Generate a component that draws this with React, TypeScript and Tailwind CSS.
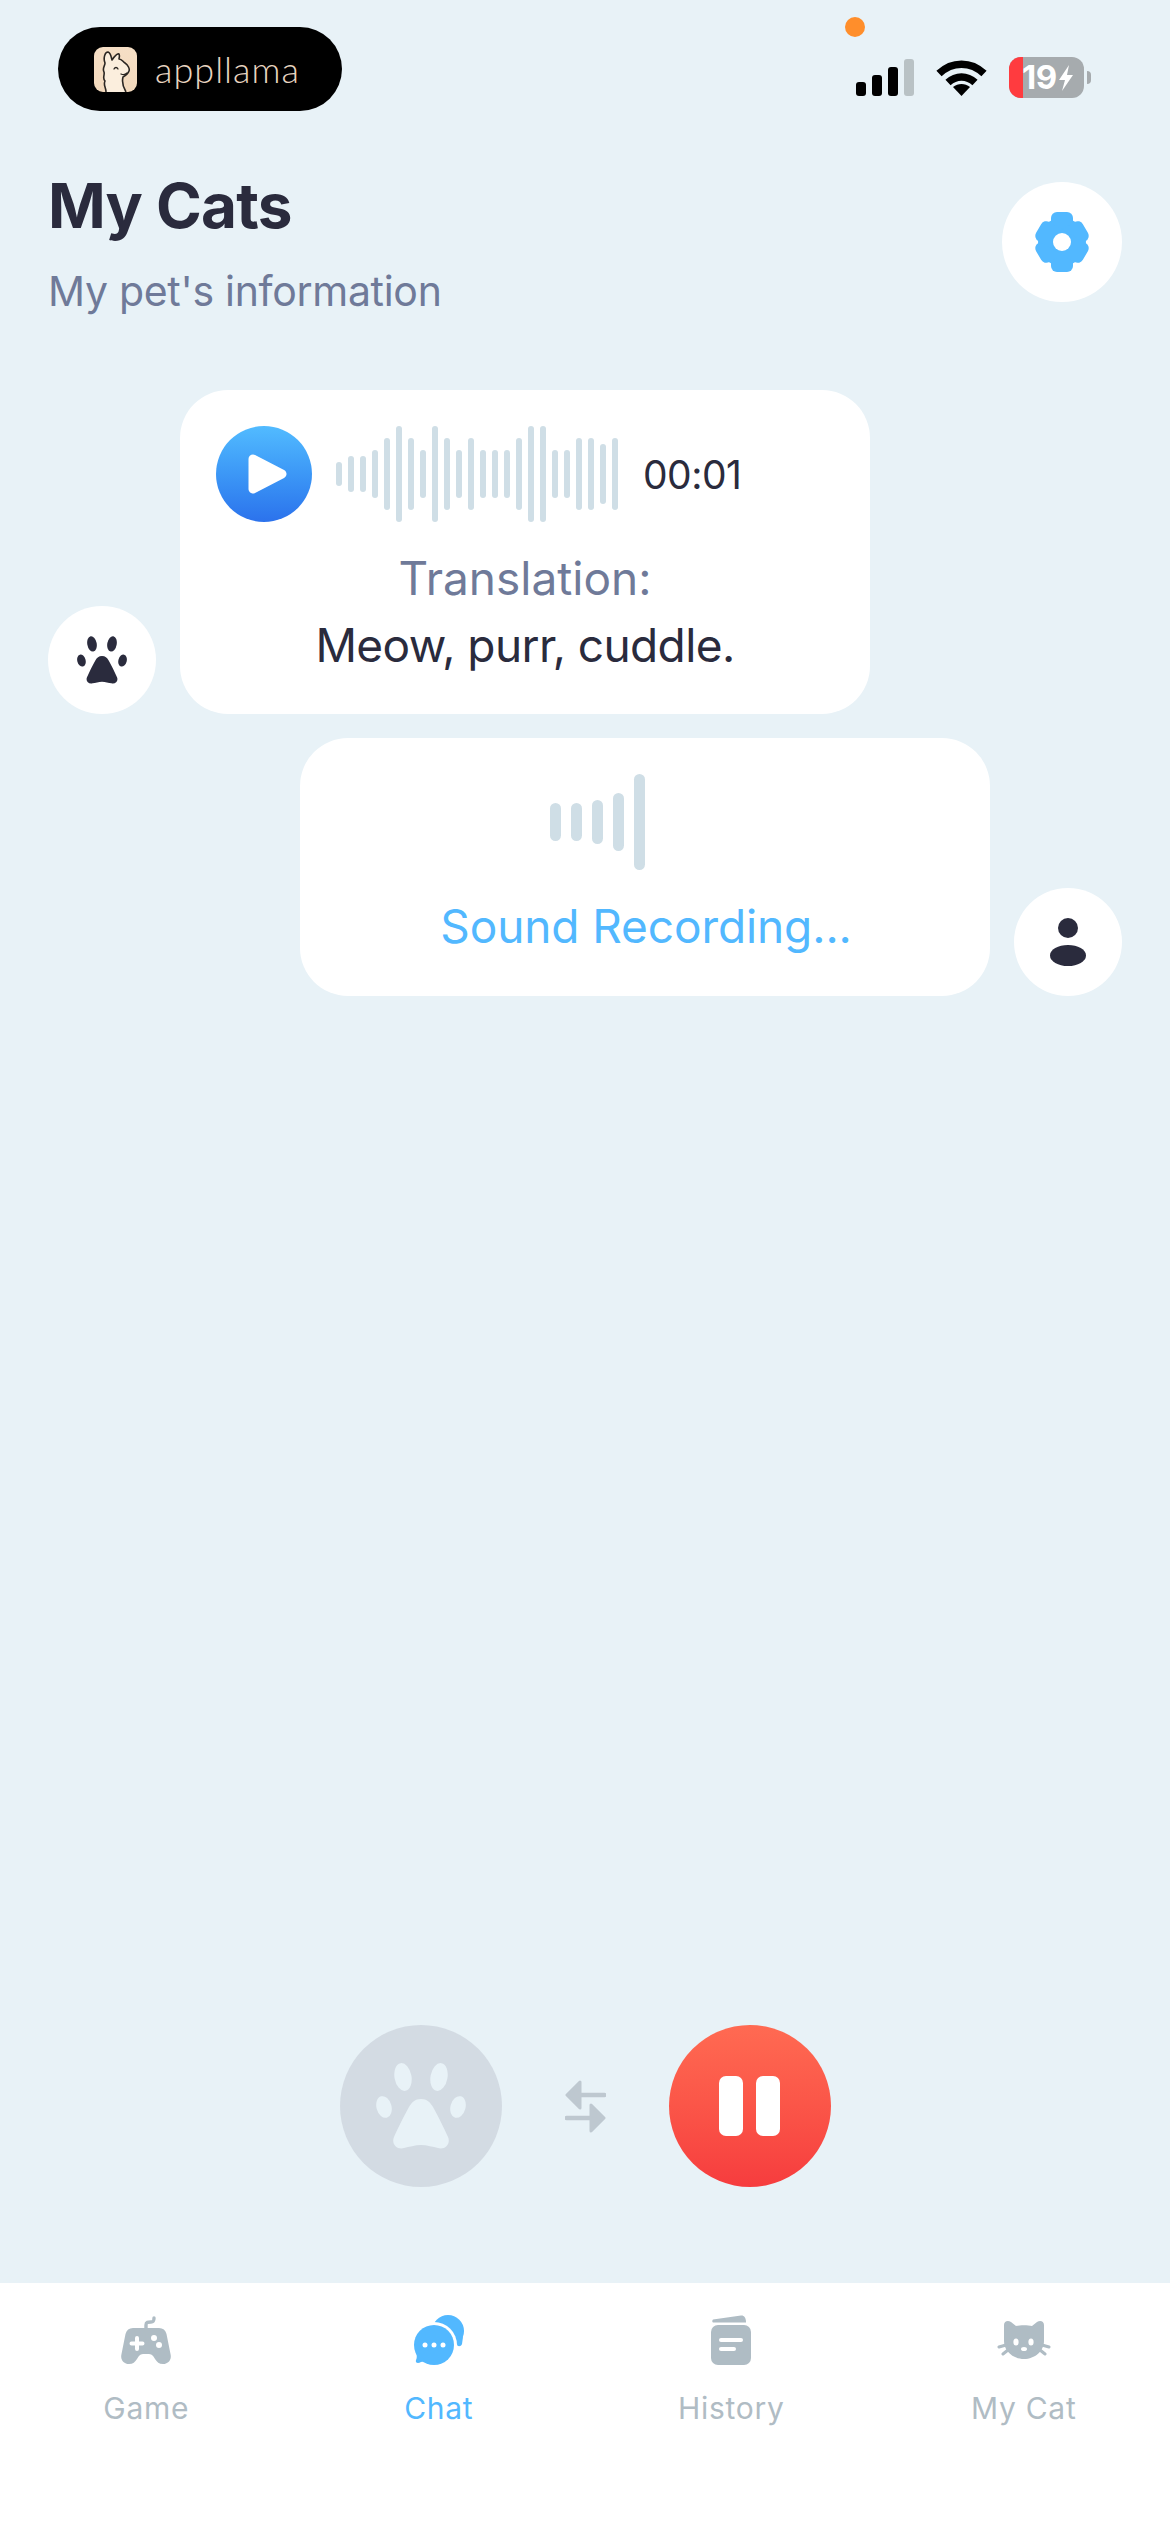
import React from 'react';

const WAVE = [24, 36, 36, 48, 72, 96, 72, 48, 96, 72, 48, 72, 48, 48, 48, 72, 96, 96, 48, 48, 72, 72, 60, 72];
const LEVELS = [38, 38, 44, 58, 96];

const PawIcon = ({ className, padClass }: { className: string; padClass: string }) => (
  <svg viewBox="0 0 90 86" className={`${className} ${padClass}`}>
    <ellipse cx="27" cy="14" rx="8.5" ry="14" transform="rotate(-10 27 14)" />
    <ellipse cx="63" cy="14" rx="8.5" ry="14" transform="rotate(10 63 14)" />
    <ellipse cx="8" cy="44" rx="7.5" ry="11" transform="rotate(-15 8 44)" />
    <ellipse cx="82" cy="44" rx="7.5" ry="11" transform="rotate(15 82 44)" />
    <path d="M45 36C51 36 54 39 57 44C62 53 68 65 72 74C75 81 69 87 62 85C57 84 51 82 45 82C39 82 33 84 28 85C21 87 15 81 18 74C22 65 28 53 33 44C36 39 39 36 45 36Z" />
  </svg>
);

const GearIcon = () => (
  <svg viewBox="0 0 60 60" className="h-[60px] w-[60px] fill-[#52b8ff]">
    <circle cx="30" cy="30" r="24" />
    <rect x="19" y="0" width="22" height="60" rx="6" />
    <rect x="19" y="3" width="22" height="54" rx="6" transform="rotate(60 30 30)" />
    <rect x="19" y="3" width="22" height="54" rx="6" transform="rotate(120 30 30)" />
    <circle cx="30" cy="30" r="9" className="fill-white" />
  </svg>
);

const LlamaIcon = () => (
  <svg viewBox="0 0 43 45" className="h-[45px] w-[43px] shrink-0">
    <defs>
      <linearGradient id="llamaBg" x1="0" y1="0" x2="0" y2="1">
        <stop offset="0" stopColor="#f6dfc6" />
        <stop offset="1" stopColor="#f3d9bc" />
      </linearGradient>
    </defs>
    <rect width="43" height="45" rx="9" fill="url(#llamaBg)" />
    <path
      d="M12 45C12 40 9 38 11 34C8 31 11 28 10 25C8 21 11 19 11 16C9 11 11 5 14 5C17 6 17 10 18 13C20 10 23 6 25 7C26 9 25 11 25 12C28 12 29 15 31 16C34 18 36 22 35 24C34 27 31 29 29 30C28 34 29 40 32 45"
      fill="#fbeedd"
      stroke="#2b2622"
      strokeWidth="1.6"
      strokeLinejoin="round"
    />
    <path d="M20 22C21 20 23 20 24 22M27 27C29 28 31 28 33 26" fill="none" stroke="#2b2622" strokeWidth="1.3" strokeLinecap="round" />
  </svg>
);

const GameIcon = () => (
  <svg viewBox="0 0 50 48" className="h-[48px] w-[50px] fill-[#afbcc4]">
    <path d="M25 14V9C25 6 27 6 30 6C33 6 33 4 33 2" fill="none" stroke="#afbcc4" strokeWidth="3.4" strokeLinecap="round" />
    <path d="M12 12H38C42 12 44.5 14 45.5 18L49.5 38C51 44 47 48 42 48C38 48 36 46 34 43C33 41 31 38 28 38H22C19 38 17 41 16 43C14 46 12 48 8 48C3 48 -1 44 0.5 38L4.5 18C5.5 14 8 12 12 12Z" />
    <path d="M16 22V33M10.5 27.5H21.5" stroke="#fff" strokeWidth="4" strokeLinecap="round" />
    <circle cx="33" cy="22" r="3" fill="#fff" />
    <circle cx="38" cy="29" r="3" fill="#fff" />
  </svg>
);

const ChatIcon = () => (
  <svg viewBox="0 0 50 50" className="h-[50px] w-[50px] fill-[#52b8ff]">
    <circle cx="34" cy="16" r="16" />
    <path d="M42 24L49 22L48 29C47 32 43 32 43 29Z" />
    <circle cx="20" cy="30" r="23" fill="#fff" />
    <circle cx="20" cy="30" r="20" />
    <path d="M2 36C3 41 3 43 2 45C1 48 4 49 7 47L12 46Z" />
    <circle cx="11" cy="30" r="2.5" fill="#fff" />
    <circle cx="20" cy="30" r="2.5" fill="#fff" />
    <circle cx="29" cy="30" r="2.5" fill="#fff" />
  </svg>
);

const HistoryIcon = () => (
  <svg viewBox="0 0 40 50" className="h-[50px] w-[40px] fill-[#afbcc4]">
    <path d="M2 4.5L30 0.5C33 0.2 35 2.5 35 7.5H2C1 7.5 1 5 2 4.5Z" />
    <rect x="0" y="10" width="40" height="40" rx="7" />
    <rect x="8" y="23" width="24" height="4" rx="2" fill="#fff" />
    <rect x="8" y="32" width="17" height="4" rx="2" fill="#fff" />
  </svg>
);

const CatIcon = () => (
  <svg viewBox="0 0 54 38" className="h-[38px] w-[54px] fill-[#afbcc4]">
    <path d="M7 4C7 0 11 -1 14 1L19 5C23 4 31 4 35 5L40 1C43 -1 47 0 47 4V20C47 30 38 38 27 38C16 38 7 30 7 20Z" />
    <path d="M9 24L2 26M11 29L6 33M45 24L52 26M43 29L48 33" fill="none" stroke="#afbcc4" strokeWidth="3" strokeLinecap="round" />
    <ellipse cx="19" cy="21" rx="2.6" ry="3.5" fill="#fff" />
    <ellipse cx="34" cy="21" rx="2.6" ry="3.5" fill="#fff" />
    <ellipse cx="27" cy="28" rx="3" ry="2" fill="#fff" />
  </svg>
);

const TabItem = ({ label, active, children }: { label: string; active?: boolean; children: React.ReactNode }) => (
  <div className="flex flex-col items-center">
    <div className="flex h-[50px] items-center">{children}</div>
    <span
      className={`mt-[25px] text-[30px] leading-[36px] tracking-[0.7px] ${active ? 'text-[#52b8ff]' : 'text-[#b0bcc4]'}`}
    >
      {label}
    </span>
  </div>
);

const StatusIcons = () => (
  <div className="flex items-center">
    <div className="flex h-[37px] items-end gap-[6px]">
      <div className="h-[14px] w-[10px] rounded-[3px] bg-black" />
      <div className="h-[21px] w-[10px] rounded-[3px] bg-black" />
      <div className="h-[29px] w-[10px] rounded-[3px] bg-black" />
      <div className="h-[37px] w-[10px] rounded-[3px] bg-[#b9c2c5]" />
    </div>
    <svg viewBox="0 0 51 37" className="ml-[22px] h-[37px] w-[51px]">
      <path d="M3 14.5C16 2 35 2 48 14.5" fill="none" stroke="#000" strokeWidth="7.5" />
      <path d="M12 23.5C20 16 31 16 39 23.5" fill="none" stroke="#000" strokeWidth="7.5" />
      <path d="M17 28C22 24 29 24 34 28L25.500 37Z" fill="#000" />
    </svg>
    <div className="relative ml-[22px] flex h-[41px] w-[75px] items-center overflow-hidden rounded-[12px] bg-[#a6abae]">
      <div className="h-full w-[14px] bg-[#ff3b3f]" />
      <span className="ml-[-1px] text-[33px] leading-none font-bold tracking-[-0.5px] text-white">19</span>
      <svg viewBox="0 0 16 26" className="ml-[1px] h-[26px] w-[16px] fill-white">
        <path d="M11 0L1 15H7L4 26L15 10H9Z" />
      </svg>
    </div>
    <div className="ml-[3px] h-[13px] w-[4px] rounded-r-full bg-[#a6abae]" />
  </div>
);

export default function App() {
  return (
    <div className="flex h-[2532px] w-[1170px] flex-col overflow-hidden bg-[#e8f2f7] font-['Inter',sans-serif]">
      {/* status bar */}
      <div className="relative flex h-[111px] items-end justify-between pr-[79px] pl-[58px]">
        <div className="flex h-[84px] w-[284px] items-center rounded-full bg-black pl-[36px]">
          <LlamaIcon />
          <span className="ml-[18px] font-['Lato',sans-serif] text-[36px] leading-none font-light tracking-[1px] text-[#e8d5c0]">appllama</span>
        </div>
        <div className="mb-[13px]">
          <StatusIcons />
        </div>
        <div className="absolute top-[17px] left-[845px] h-[20px] w-[20px] rounded-full bg-[#ff8e2b]" />
      </div>

      {/* page heading */}
      <div className="flex items-start justify-between pt-[63px] pr-[48px] pl-[48px]">
        <div>
          <h1 className="text-[62px] leading-[64px] font-bold tracking-[-0.8px] text-[#2a2b3d]">My Cats</h1>
          <p className="mt-[28px] text-[41px] leading-[50px] tracking-[-0.3px] text-[#6f7a99]">My pet's information</p>
        </div>
        <button className="mt-[8px] flex h-[120px] w-[120px] items-center justify-center rounded-full bg-white">
          <GearIcon />
        </button>
      </div>

      {/* cat message */}
      <div className="mt-[74px] flex items-end gap-[24px] pl-[48px]">
        <div className="flex h-[108px] w-[108px] items-center justify-center rounded-full bg-white">
          <PawIcon className="h-[48px] w-[50px]" padClass="fill-[#2a2b3d]" />
        </div>
        <div className="flex h-[324px] w-[690px] flex-col rounded-[48px] bg-white pt-[36px]">
          <div className="flex h-[96px] items-center pl-[36px]">
            <div className="flex h-[96px] w-[96px] items-center justify-center rounded-full bg-gradient-to-b from-[#52bbff] to-[#2c72ec]">
              <svg viewBox="0 0 39 40" className="ml-[6px] h-[40px] w-[39px] fill-white stroke-white">
                <path d="M5 5L34 20L5 35Z" strokeWidth="9" strokeLinejoin="round" />
              </svg>
            </div>
            <div className="ml-[24px] flex items-center gap-[6px]">
              {WAVE.map((h, i) => (
                <div key={i} className="w-[6px] rounded-full bg-[#cfdee6]" style={{ height: h }} />
              ))}
            </div>
            <span className="ml-[25px] text-[39px] leading-none tracking-[-0.5px] text-[#2a2b3d]">00:01</span>
          </div>
          <div className="mt-[23px] text-center text-[46px] leading-[66px] text-[#6f7a99]">Translation:</div>
          <div className="mt-[1px] text-center text-[46px] leading-[66px] tracking-[-0.6px] text-[#2a2b3d]">Meow, purr, cuddle.</div>
        </div>
      </div>

      {/* user recording */}
      <div className="mt-[24px] flex items-end justify-end gap-[24px] pr-[48px]">
        <div className="flex h-[258px] w-[690px] flex-col items-center rounded-[48px] bg-white pt-[36px]">
          <div className="ml-[-96px] flex h-[96px] items-center gap-[10px]">
            {LEVELS.map((h, i) => (
              <div key={i} className="w-[11px] rounded-full bg-[#cfdee6]" style={{ height: h }} />
            ))}
          </div>
          <div className="mt-[23px] pl-[2px] text-[46px] leading-[66px] tracking-[-0.1px] text-[#52b8ff]">Sound Recording...</div>
        </div>
        <div className="flex h-[108px] w-[108px] items-center justify-center rounded-full bg-white">
          <svg viewBox="0 0 36 48" className="h-[48px] w-[36px] fill-[#2a2b3d]">
            <circle cx="18" cy="10" r="10" />
            <ellipse cx="18" cy="37.5" rx="18" ry="10.5" />
          </svg>
        </div>
      </div>

      <div className="flex-1" />

      {/* record controls */}
      <div className="flex items-center justify-center gap-[63px] pb-[96px]">
        <div className="flex h-[162px] w-[162px] items-center justify-center rounded-full bg-[#d3dbe3]">
          <PawIcon className="h-[86px] w-[90px]" padClass="fill-[#e8f2f7]" />
        </div>
        <svg viewBox="0 0 41 53" className="h-[53px] w-[41px] fill-[#bec8d0] stroke-[#bec8d0]">
          <path d="M2 15L15 2V28Z" strokeWidth="3" strokeLinejoin="round" />
          <path d="M15 15H39.500" strokeWidth="4.500" strokeLinecap="round" />
          <path d="M39 38L26 25V51Z" strokeWidth="3" strokeLinejoin="round" />
          <path d="M1.500 38H26" strokeWidth="4.500" strokeLinecap="round" />
        </svg>
        <div className="flex h-[162px] w-[162px] items-center justify-center gap-[13px] rounded-full bg-gradient-to-b from-[#ff6a52] to-[#f63c3e]">
          <div className="h-[60px] w-[24px] rounded-[7px] bg-white" />
          <div className="h-[60px] w-[24px] rounded-[7px] bg-white" />
        </div>
      </div>

      {/* tab bar */}
      <div className="grid h-[249px] grid-cols-4 bg-white pt-[32px]">
        <TabItem label="Game"><GameIcon /></TabItem>
        <TabItem label="Chat" active><ChatIcon /></TabItem>
        <TabItem label="History"><HistoryIcon /></TabItem>
        <TabItem label="My Cat"><CatIcon /></TabItem>
      </div>
    </div>
  );
}
